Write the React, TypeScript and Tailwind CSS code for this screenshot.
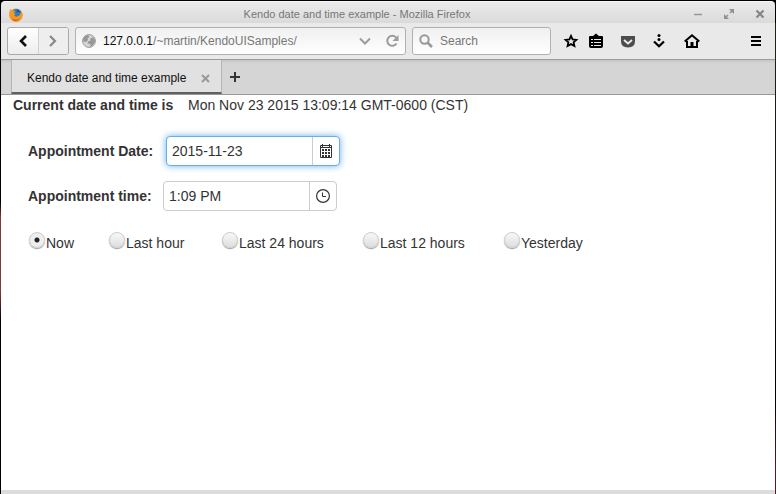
import { useState } from "react";

const ranges = ["Now", "Last hour", "Last 24 hours", "Last 12 hours", "Yesterday"];

function FirefoxLogo() {
  return (
    <svg width="14" height="14" viewBox="0 0 14 14" aria-hidden="true">
      <circle cx="7" cy="7.2" r="6.6" fill="#f08a1d" />
      <circle cx="7.6" cy="5.6" r="4.6" fill="#2f7fc4" />
      <path d="M8 1.500 Q10.500 2 11.500 5 Q9 3.500 7.500 4.500 Z" fill="#1c4f8f" />
      <path d="M.6 3 L1.500 1 L3 2.500 Q5 2 6 3.500 L4.800 5 L6.500 6 L5 7.500 Q7 9.500 9.500 8 Q11.500 7 11.500 4.500 L13.500 6 Q13.600 11 9.500 13.200 Q5 14.500 2 11.500 Q-.3 8 .6 3 Z" fill="#f5981f" />
      <path d="M3 10.500 Q7 13 11 10 Q9 13.500 5 13 Z" fill="#e05a12" />
    </svg>
  );
}

function TitleBar() {
  return (
    <header className="flex h-[22px] items-center rounded-t-sm border-t border-[#f8f8f8] bg-linear-to-b from-[#ebebeb] to-[#dadada] pl-2 pr-[10px]">
      <div className="flex flex-1 items-center pt-1">
        <FirefoxLogo />
      </div>
      <h1 className="mr-[60px] pt-1 text-[11px] text-[#777]">Kendo date and time example - Mozilla Firefox</h1>
      <div className="flex flex-1 items-center justify-end gap-5 pt-[3px]">
        <button type="button" aria-label="Minimize">
          <svg width="10" height="10" viewBox="0 0 10 10" className="block"><path d="M1 5.500H9" stroke="#969696" strokeWidth="1.500" /></svg>
        </button>
        <button type="button" aria-label="Maximize">
          <svg width="12" height="12" viewBox="0 0 12 12" className="block" fill="#929292" stroke="#929292">
            <path d="M6 1H11V6Z M1 6V11H6Z" stroke="none" />
            <path d="M7 5L9.500 2.500M5 7L2.500 9.500" strokeWidth="1.500" />
          </svg>
        </button>
        <button type="button" aria-label="Close">
          <svg width="10" height="10" viewBox="0 0 10 10" className="block"><path d="M1.500 1.500L8.500 8.500M8.500 1.500L1.500 8.500" stroke="#858585" strokeWidth="2.200" /></svg>
        </button>
      </div>
    </header>
  );
}

function Toolbar() {
  return (
    <nav className="flex h-[37px] items-center border-b border-[#9c9c9c] bg-[#e9e9e9] pl-[6px] pr-[14px]">
      <div className="flex h-7 w-[62px] shrink-0 overflow-hidden rounded-[3px] border border-[#a9a9a9] bg-linear-to-b from-white to-[#ededed]">
        <button type="button" aria-label="Back" className="flex flex-1 items-center justify-center">
          <svg width="10" height="12" viewBox="0 0 10 12" fill="none" stroke="#111" strokeWidth="2.600"><path d="M8 1L3 6L8 11" /></svg>
        </button>
        <button type="button" aria-label="Forward" className="flex flex-1 items-center justify-center border-l border-[#d0d0d0] bg-[#eeeeee]">
          <svg width="10" height="12" viewBox="0 0 10 12" fill="none" stroke="#888" strokeWidth="2.200"><path d="M2 1L7 6L2 11" /></svg>
        </button>
      </div>
      <div className="ml-[6px] flex h-7 flex-1 items-center rounded-[3px] border border-[#b1b1b1] bg-linear-to-b from-[#f0f0f0] to-white px-[6px]">
        <svg width="14" height="14" viewBox="0 0 14 14" className="shrink-0">
          <circle cx="7" cy="7" r="6.400" fill="#d6d6d6" stroke="#989898" />
          <path d="M1 5L3 2L6 1L7.500 3L5.500 4.500L6 6L4 8L1.500 7.500Z M8 5L11 3L13 6L12.500 9L10 12L8 13L8.500 10L5.500 9.500L6 7.500L8.500 6.500Z" fill="#989898" />
        </svg>
        <div className="ml-[7px] flex-1 text-xs whitespace-nowrap text-[#777]">
          <span className="text-[#111]">127.0.0.1</span>/~martin/KendoUISamples/
        </div>
        <button type="button" aria-label="Show history" className="mr-[14px]">
          <svg width="12" height="8" viewBox="0 0 12 8" className="block" fill="none" stroke="#9b9b9b" strokeWidth="2"><path d="M1 1.500L6 6.500L11 1.500" /></svg>
        </button>
        <button type="button" aria-label="Reload">
          <svg width="14" height="14" viewBox="0 0 14 14" className="block" fill="none" stroke="#9b9b9b" strokeWidth="2">
            <path d="M11 3.500A5 5 0 1 0 11.500 9.500" />
            <path d="M13.500 1V7H7.500Z" fill="#9b9b9b" stroke="none" />
          </svg>
        </button>
      </div>
      <label className="ml-[6px] flex h-7 w-[139px] shrink-0 items-center rounded-[3px] border border-[#b1b1b1] bg-linear-to-b from-[#f0f0f0] to-white pl-[6px]">
        <svg width="14" height="14" viewBox="0 0 14 14" className="shrink-0" fill="none" stroke="#999" strokeWidth="2">
          <circle cx="5.500" cy="5.500" r="4.200" /><path d="M8.500 8.500L13 13" strokeWidth="2.500" />
        </svg>
        <input type="search" aria-label="Search" placeholder="Search" className="ml-[7px] w-full min-w-0 bg-transparent text-xs outline-none placeholder:text-[#777]" />
      </label>
      <button type="button" aria-label="Bookmark" className="ml-3">
        <svg width="16" height="16" viewBox="0 0 16 16" className="block"><path d="M8 2.800L9.600 6.300L13.400 6.800L10.600 9.300L11.400 13L8 11.100L4.600 13L5.400 9.300L2.600 6.800L6.400 6.300Z" fill="none" stroke="#000" strokeWidth="1.800" /></svg>
      </button>
      <button type="button" aria-label="Bookmarks list" className="ml-[9px]">
        <svg width="16" height="16" viewBox="0 0 16 16" className="block">
          <path d="M1 4Q1 3 2 3H5L8 .5L11 3H14Q15 3 15 4V13Q15 15 13 15H3Q1 15 1 13Z" />
          <path d="M3 6.500H5M6 6.500H13M3 9.500H5M6 9.500H13M3 12.500H5M6 12.500H13" stroke="#e9e9e9" />
        </svg>
      </button>
      <button type="button" aria-label="Save to Pocket" className="ml-4">
        <svg width="16" height="16" viewBox="0 0 16 16" className="block"><path d="M1 3H15V8Q15 14.500 8 14.500Q1 14.500 1 8Z" fill="#4c4c4c" /><path d="M4 7L8 10.500L12 7" fill="none" stroke="#e9e9e9" strokeWidth="2" /></svg>
      </button>
      <button type="button" aria-label="Downloads" className="ml-4">
        <svg width="14" height="16" viewBox="0 0 14 16" className="block"><circle cx="7" cy="2.500" r="1.500" /><circle cx="7" cy="6.500" r="1.500" /><path d="M2 8.500L7 13.300L12 8.500" fill="none" stroke="#000" strokeWidth="2.200" /></svg>
      </button>
      <button type="button" aria-label="Home" className="ml-[18px]">
        <svg width="16" height="16" viewBox="0 0 16 16" className="block" fill="none" stroke="#000" strokeWidth="2"><path d="M.7 8.500L8 2.300L15.300 8.500M3 8V14H13V8" /><path d="M8 14V9" strokeWidth="3" /></svg>
      </button>
      <button type="button" aria-label="Open menu" className="ml-[51px]">
        <svg width="10" height="12" viewBox="0 0 10 12" className="block" fill="none" stroke="#000" strokeWidth="2"><path d="M0 2H10M0 6H10M0 10H10" /></svg>
      </button>
    </nav>
  );
}

function TabStrip() {
  return (
    <div className="flex h-[35px] border-b border-[#999] bg-[#d5d5d5] pl-[10px] shadow-[inset_0_2px_2px_#c8c8c8]">
      <div className="flex w-[211px] items-center border-x border-b-2 border-x-[#b5b5b5] border-b-[#606060] bg-[#e1e1e1] pl-[15px] pr-[11px] pt-1">
        <span className="flex-1 text-xs text-[#111]">Kendo date and time example</span>
        <button type="button" aria-label="Close tab">
          <svg width="9" height="9" viewBox="0 0 9 9" className="block"><path d="M1 1L8 8M8 1L1 8" stroke="#999" strokeWidth="2" /></svg>
        </button>
      </div>
      <button type="button" aria-label="New tab" className="ml-2">
        <svg width="10" height="10" viewBox="0 0 10 10" className="block"><path d="M5 0V10M0 5H10" stroke="#333" strokeWidth="2" /></svg>
      </button>
    </div>
  );
}

export default function App() {
  const [range, setRange] = useState("Now");
  return (
    <div className="flex min-h-screen flex-col bg-[linear-gradient(#000_41%,#86363b_44%,#86363b_59%,#000_65%),linear-gradient(#222611_0%,#111_50%,#000_80%,#551b25_95%)] bg-[size:1px_100%,100%_100%] bg-no-repeat font-['Liberation_Sans',Arial,sans-serif]">
      <div className="bg-black px-px pt-px">
        <TitleBar />
      </div>
      <div className="flex flex-1 flex-col px-px">
        <Toolbar />
        <TabStrip />
        <main className="flex-1 bg-white px-3 text-sm text-[#333]">
          <p className="flex gap-1"><b className="w-[171px]">Current date and time is</b> Mon Nov 23 2015 13:09:14 GMT-0600 (CST)</p>
          <form className="px-[15px] pt-[21px]">
            <div className="flex items-center gap-1">
              <label htmlFor="date" className="w-[134px] font-bold">Appointment Date:</label>
              <div className="flex h-[30px] w-[174px] rounded border border-[#66afe9] bg-white shadow-[0_0_7px_#66afe9]">
                <input id="date" defaultValue="2015-11-23" className="min-w-0 flex-1 px-[5px] outline-none" />
                <button type="button" aria-label="Open calendar" className="flex w-[27px] items-center justify-center border-l border-[#ccc]">
                  <svg width="12" height="14" viewBox="0 0 12 14" className="shrink-0" fill="none" stroke="#333"><path d="M.5 1.500H11.500V13.500H.5ZM2.500 0V3M9.500 0V3M1 3.500H11" /><path d="M2 6H10M2 9H10M2 12H10" strokeWidth="2" strokeDasharray="2 1" /></svg>
                </button>
              </div>
            </div>
            <div className="mt-[15px] flex items-center gap-1">
              <label htmlFor="time" className="w-[131px] font-bold">Appointment time:</label>
              <div className="flex h-[30px] w-[174px] rounded border border-[#ccc] bg-white">
                <input id="time" defaultValue="1:09 PM" className="min-w-0 flex-1 px-[5px] outline-none" />
                <button type="button" aria-label="Open time list" className="flex w-[27px] items-center justify-center border-l border-[#ccc]">
                  <svg width="14" height="14" viewBox="0 0 14 14" className="shrink-0" fill="none" stroke="#333"><circle cx="7" cy="7" r="6.400" strokeWidth="1.200" /><path d="M6.500 3.500V7.500H10" /></svg>
                </button>
              </div>
            </div>
            <div className="mt-5 grid grid-cols-[80px_113px_141px_141px_auto]">
              {ranges.map((name) => (
                <label key={name} className="flex items-start">
                  <input
                    type="radio"
                    name="range"
                    checked={range === name}
                    onChange={() => setRange(name)}
                    className="m-px mr-0 size-4 shrink-0 appearance-none rounded-full border border-[#ccc] bg-linear-to-b from-[#f8f8f8] to-[#dedede] shadow-[0_1px_1px_#999] checked:bg-[radial-gradient(circle,#222_2px,#eee_3px)]"
                  />
                  <span className="pl-px pt-[2px]">{name}</span>
                </label>
              ))}
            </div>
          </form>
        </main>
        <footer className="h-1 bg-[#dcdcdc]" />
      </div>
    </div>
  );
}
